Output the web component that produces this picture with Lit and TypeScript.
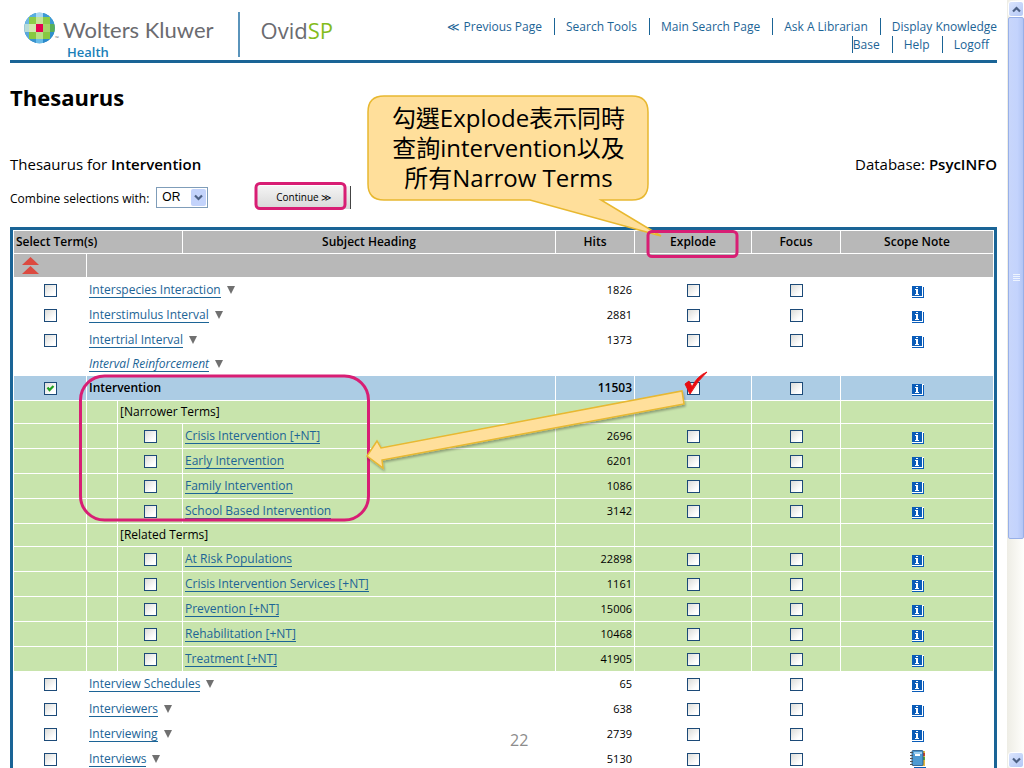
import { LitElement, html, css, svg, nothing } from "lit";
import { customElement, property } from "lit/decorators.js";

type Kind = "plain" | "used" | "main" | "group" | "child";
interface Term {
  kind: Kind;
  name: string;
  hits?: number;
  note?: "info" | "book";
}

const t = (kind: Kind, name: string, hits?: number, note: "info" | "book" = "info"): Term => ({ kind, name, hits, note });

const TERMS: Term[] = [
  t("plain", "Interspecies Interaction", 1826),
  t("plain", "Interstimulus Interval", 2881),
  t("plain", "Intertrial Interval", 1373),
  t("used", "Interval Reinforcement"),
  t("main", "Intervention", 11503),
  t("group", "[Narrower Terms]"),
  t("child", "Crisis Intervention [+NT]", 2696),
  t("child", "Early Intervention", 6201),
  t("child", "Family Intervention", 1086),
  t("child", "School Based Intervention", 3142),
  t("group", "[Related Terms]"),
  t("child", "At Risk Populations", 22898),
  t("child", "Crisis Intervention Services [+NT]", 1161),
  t("child", "Prevention [+NT]", 15006),
  t("child", "Rehabilitation [+NT]", 10468),
  t("child", "Treatment [+NT]", 41905),
  t("plain", "Interview Schedules", 65),
  t("plain", "Interviewers", 638),
  t("plain", "Interviewing", 2739),
  t("plain", "Interviews", 5130, "book"),
];

const infoIcon = html`<svg class="icon" width="12" height="14" viewBox="0 0 12 14" shape-rendering="crispEdges" aria-hidden="true">
  <path fill="#fff" d="M0 2h12v12H0z" />
  <path fill="#0a5cb8" d="M0 2h10v10H0zM11 3h1v11H0v-1h11z" />
  <path fill="#fff" d="M4 3h2v1H4zM4 5h2v5h1v1H3v-1h1V6H3V5h1z" />
</svg>`;

const bookIcon = html`<svg class="icon" width="16" height="18" viewBox="0 0 16 18" aria-hidden="true">
  <path fill="#0a5cb8" d="M4 17h12v1H4z" />
  <path fill="#e9b93c" d="M12 1h3v15h-3z" />
  <path fill="#c8402c" d="M13 3h2v3h-2z" />
  <path fill="#5aa43c" d="M13 7h2v3h-2z" />
  <rect x="2" y="0.500" width="11" height="15" rx="1" fill="#4f9ad2" stroke="#1d4f80" stroke-width="0.800" />
  <path fill="#9dceee" d="M4 2h8v2H4z" />
  <path fill="#fff" d="M5 4h5v2H5z" />
  <path stroke="#555" d="M0 2.500h3M0 5.500h3M0 8.500h3M0 11.500h3M0 14.500h3" />
</svg>`;

const chevron = (up: boolean) => html`<svg width="9" height="7" viewBox="0 0 9 7" aria-hidden="true">
  <path d=${up ? "M1 5.500L4.500 2L8 5.500" : "M1 1.500L4.500 5L8 1.500"} fill="none" stroke="#4d6185" stroke-width="2.200" />
</svg>`;

@customElement("term-row-mark")
class TermRowMark extends LitElement {
  @property() label = "";
  @property({ type: Boolean }) on = false;
  static styles = css`
    :host { display: inline-block; vertical-align: middle; height: 13px; }
    input {
      appearance: none; display: block; margin: 0; width: 13px; height: 13px;
      box-sizing: border-box; border: 1px solid #1c4a78;
      background: linear-gradient(135deg, #dcdcd8, #fff 75%);
    }
    .box { display: grid; }
    .box > * { grid-area: 1 / 1; }
    svg { pointer-events: none; }
  `;
  render() {
    return html`<div class="box">
      <input type="checkbox" aria-label=${this.label} .checked=${this.on} />
      ${this.on
        ? html`<svg width="13" height="13" viewBox="0 0 13 13" aria-hidden="true"><path d="M3.500 5.500L5.500 8L9.500 4" fill="none" stroke="#21a121" stroke-width="2.200" /></svg>`
        : nothing}
    </div>`;
  }
}

@customElement("xp-scrollbar")
class XpScrollbar extends LitElement {
  static styles = css`
    :host {
      display: flex; flex-direction: column; box-sizing: border-box; padding: 1px 0 0 1px;
      background: linear-gradient(90deg, #eeede5, #fefefb);
    }
    .cap {
      flex: none; height: 16px; display: grid; place-items: center;
      border: 1px solid #fff; border-radius: 3px; box-sizing: border-box;
      background: linear-gradient(135deg, #dbe5fd, #b4c8f6);
    }
    .track { flex: 1; display: flex; flex-direction: column; }
    .thumb {
      height: 71%; display: grid; place-content: center; gap: 1px; box-sizing: border-box;
      border: 1px solid #98b0e8; border-radius: 2px;
      background: linear-gradient(90deg, #c8d6fb, #c3d3fd 60%, #b3c5f4);
    }
    .thumb i { width: 7px; height: 1px; background: #eef4fe; }
  `;
  render() {
    return html`<div class="cap">${chevron(true)}</div>
      <div class="track"><div class="thumb"><i></i><i></i><i></i><i></i></div></div>
      <div class="cap">${chevron(false)}</div>`;
  }
}

@customElement("app-root")
class AppRoot extends LitElement {
  static styles = css`
    :host {
      display: flex; position: relative; height: 100vh; overflow: hidden; background: #fff; color: #000;
      font: 12px/16px "Open Sans", "Noto Sans", sans-serif;
    }
    main { flex: 1; min-width: 0; padding: 0 10px; }
    xp-scrollbar { width: 17px; }
    a { color: #1c6496; text-decoration: none; }
    header {
      display: flex; justify-content: space-between; align-items: flex-start;
      height: 60px; border-bottom: 3px solid #1a6496;
    }
    .brand { display: flex; padding: 12px 0 0 14px; }
    .globe { display: block; flex: none; }
    .tm { font-size: 5px; line-height: 6px; color: #6b6b70; align-self: flex-start; padding-top: 23px; width: 8px; }
    .names { display: flex; flex-direction: column; padding: 4px 0 0 0; }
    .wk { font: 22px/28px "Lato", sans-serif; color: #6b6b70; }
    .health { font: 600 13px/16px "Open Sans", sans-serif; color: #1a80b8; padding-left: 4px; }
    .ovid { font: 22px/36px "Open Sans", sans-serif; color: #6b6b70; border-left: 2px solid #5a94bb; padding-left: 21px; margin-left: 24px; height: 45px; }
    .ovid span { color: #84bc1c; }
    nav { padding-top: 18px; display: flex; flex-direction: column; align-items: flex-end; gap: 1px; }
    nav div { display: flex; line-height: 17px; }
    nav a + a { border-left: 1px solid #1a6496; margin-left: 12px; padding-left: 11px; }
    nav .last { padding-right: 8px; }
    nav .last a:first-child { border-left: 1px solid #1a6496; }
    h1 { font-size: 22px; line-height: 28px; margin: 20px 0 0; }
    b { font-weight: 600; }
    .about { display: flex; justify-content: space-between; font-size: 15px; line-height: 20px; margin-top: 43px; }
    form { display: flex; align-items: center; height: 24px; margin-top: 11px; }
    label { padding-top: 4px; }
    .combo { display: grid; margin-left: 7px; width: 52px; }
    .combo > * { grid-area: 1 / 1; }
    select {
      appearance: none; height: 21px; padding: 0 0 0 5px; border: 1px solid #7f9db9; border-radius: 0;
      background: #fff; color: #000; font: 12px "Liberation Sans", sans-serif;
    }
    .drop { justify-self: end; align-self: center; width: 15px; height: 17px; margin-right: 2px; display: grid; place-items: center; background: #c3d3fb; border-radius: 2px; pointer-events: none; }
    button {
      margin-left: 49px; width: 94px; height: 23px; padding: 0; border: 0; border-right: 1px solid #444;
      background: linear-gradient(#f4f4f4, #d8d8d8); color: #000; font: 10px "Open Sans", sans-serif;
    }
    .frame { border: 3px solid #1a6496; padding: 1px; margin-top: 18px; }
    table { width: 100%; table-layout: fixed; border-collapse: separate; border-spacing: 0; }
    th, td { padding: 0; height: 24px; border-bottom: 1px solid #fff; border-right: 1px solid #fff; text-align: center; vertical-align: middle; line-height: 16px; white-space: nowrap; }
    th { font-weight: 600; }
    tr > :last-child { border-right: 0; }
    thead th, thead td { background: #b8b8b8; height: 22px; }
    thead tr + tr td { height: 23px; }
    .left { text-align: left; padding-left: 2px; }
    td.hits { text-align: right; padding-right: 2px; font-size: 11px; }
    .used td, .group td { height: 22px; }
    .main td { background: #accce4; }
    .main .left { font-weight: 600; }
    .main td.hits { font-size: 12px; font-weight: 600; }
    .child td, .group td { background: #c8e4ac; }
    td a { border-bottom: 1px solid #1c6496; display: inline-block; line-height: 14px; }
    .used a { font-style: italic; }
    .tri { display: inline-block; margin-left: 6px; border: 4px solid transparent; border-top: 8px solid #707070; border-bottom: 0; }
    .icon { display: inline-block; vertical-align: middle; }
    td.note { padding-left: 1px; }
    .up { display: block; margin-left: 8px; }
    .marks { position: absolute; left: 0; top: 0; pointer-events: none; }
    .callout { position: absolute; left: 368px; top: 103px; width: 281px; margin: 0; text-align: center; font: 24px/30px "Open Sans", "Noto Sans CJK TC", sans-serif; }
    .page { position: absolute; left: 510px; top: 729px; font-size: 16px; line-height: 22px; color: #8c8c8c; }
  `;

  private row(r: Term) {
    const mark = (what: string, on = false) => html`<term-row-mark label="${what} ${r.name}" .on=${on}></term-row-mark>`;
    const choice = mark("Select", r.kind === "main");
    const link = html`<a href="#">${r.name}</a>`;
    const counted = r.hits !== undefined;
    let lead;
    if (r.kind === "child") {
      lead = html`<td></td><td></td><td>${choice}</td><td class="left">${link}</td>`;
    } else if (r.kind === "group") {
      lead = html`<td></td><td></td><td class="left" colspan="2">${r.name}</td>`;
    } else {
      lead = html`<td>${counted ? choice : nothing}</td>
        <td class="left" colspan="3">${r.kind === "main" ? r.name : html`${link}<span class="tri"></span>`}</td>`;
    }
    return html`<tr class=${r.kind}>${lead}
      <td class="hits">${r.hits}</td>
      <td>${counted ? mark("Explode") : nothing}</td>
      <td>${counted ? mark("Focus") : nothing}</td>
      <td class="note">${counted ? (r.note === "book" ? bookIcon : infoIcon) : nothing}</td>
    </tr>`;
  }

  private globe() {
    const cells: [number, number, string][] = [
      [1, 0, "#58aee0"], [2, 0, "#a9d8f2"], [3, 0, "#3c9ad4"],
      [0, 1, "#6cb8e4"], [1, 1, "#8ccc48"], [2, 1, "#c4e498"], [3, 1, "#8ccc48"], [4, 1, "#3c9ad4"],
      [0, 2, "#b8dcd8"], [1, 2, "#d4e8b0"], [2, 2, "#e4004f"], [3, 2, "#a4d468"], [4, 2, "#58b058"],
      [0, 3, "#58a8dc"], [1, 3, "#88c840"], [2, 3, "#b8e088"], [3, 3, "#88c840"], [4, 3, "#3090cc"],
      [1, 4, "#3a94cf"], [2, 4, "#68bce8"], [3, 4, "#2b8acb"],
    ];
    return html`<svg class="globe" width="31" height="32" viewBox="0 0 31 32" role="img" aria-label="Wolters Kluwer">
      <defs><clipPath id="disc"><circle cx="15.500" cy="16" r="15.300" /></clipPath></defs>
      <g clip-path="url(#disc)">
        <rect width="31" height="32" fill="#1878bc" />
        ${cells.map(([x, y, c]) => svg`<rect x=${[0, 5, 12, 19, 26][x]} y=${[0, 5, 12, 20, 27][y]} width=${[5, 7, 7, 7, 5][x]} height=${[5, 7, 8, 7, 5][y]} fill=${c} />`)}
      </g>
    </svg>`;
  }

  render() {
    return html`<main>
        <header>
          <div class="brand">
            ${this.globe()}<span class="tm">™</span>
            <div class="names"><span class="wk">Wolters Kluwer</span><span class="health">Health</span></div>
            <div class="ovid">Ovid<span>SP</span></div>
          </div>
          <nav>
            <div><a href="#">≪ Previous Page</a><a href="#">Search Tools</a><a href="#">Main Search Page</a><a href="#">Ask A Librarian</a><a href="#">Display Knowledge</a></div>
            <div class="last"><a href="#">Base</a><a href="#">Help</a><a href="#">Logoff</a></div>
          </nav>
        </header>
        <h1>Thesaurus</h1>
        <div class="about"><span>Thesaurus for <b>Intervention</b></span><span>Database: <b>PsycINFO</b></span></div>
        <form>
          <label for="op">Combine selections with:</label>
          <div class="combo">
            <select id="op"><option>OR</option><option>AND</option></select>
            <span class="drop">${chevron(false)}</span>
          </div>
          <button type="button">Continue ≫</button>
        </form>
        <div class="frame">
          <table>
            <colgroup>
              <col style="width:73px" /><col style="width:31px" /><col style="width:65px" /><col />
              <col style="width:79px" /><col style="width:117px" /><col style="width:89px" /><col style="width:152px" />
            </colgroup>
            <thead>
              <tr><th class="left" colspan="3">Select Term(s)</th><th>Subject Heading</th><th>Hits</th><th>Explode</th><th>Focus</th><th>Scope Note</th></tr>
              <tr><td><svg class="up" width="17" height="18" viewBox="0 0 17 18" aria-hidden="true"><path fill="#dc4a40" d="M8.500 0L17 8H0zM8.500 9L17 17H0z" /></svg></td><td colspan="7"></td></tr>
            </thead>
            <tbody>${TERMS.map((r) => this.row(r))}</tbody>
          </table>
        </div>
      </main>
      <xp-scrollbar></xp-scrollbar>
      <svg class="marks" width="760" height="530" viewBox="0 0 760 530" aria-hidden="true">
        <defs><filter id="soft" x="-10%" y="-10%" width="120%" height="130%"><feDropShadow dx="1" dy="2" stdDeviation="1.200" flood-opacity=".3" /></filter></defs>
        <path d="M384 96H632Q648 96 648 112V184Q648 200 632 200H601L661 236L530 200H384Q368 200 368 184V112Q368 96 384 96Z" fill="#ffdf9b" stroke="#e8b830" stroke-width="1.500" />
        <g fill="none" stroke="#d81e74" stroke-width="3">
          <rect x="256" y="183.500" width="89" height="25" rx="4" />
          <rect x="648" y="231.500" width="89" height="25" rx="4" />
          <rect x="80.500" y="376" width="288" height="144" rx="24" />
        </g>
        <path d="M682 391L684 404L382 460L383 468L367 456L377 441L381 448Z" fill="#ffdf9b" stroke="#e8b830" stroke-width="1.500" filter="url(#soft)" />
        <path d="M685 384L689 381L692 387Q697 376 707 372Q698 380 690 394Z" fill="#e80c10" stroke="#e80c10" />
      </svg>
      <p class="callout">勾選Explode表示同時<br />查詢intervention以及<br />所有Narrow Terms</p>
      <span class="page">22</span>`;
  }
}
